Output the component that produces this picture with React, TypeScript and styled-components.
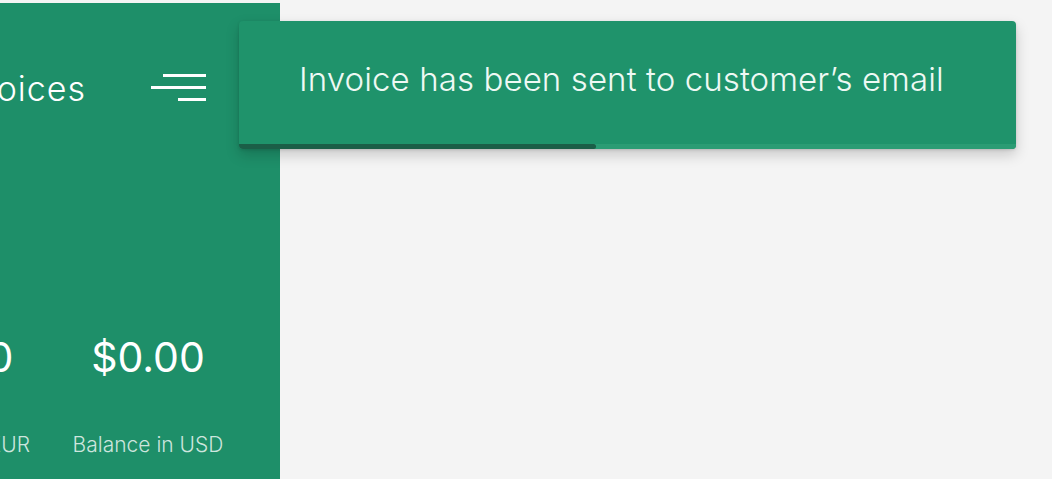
import styled, { createGlobalStyle } from "styled-components";

const GlobalStyle = createGlobalStyle`
  html, body {
    margin: 0;
    padding: 0;
    background: #f4f4f4;
    font-family: Inter, "Noto Sans", "Liberation Sans", sans-serif;
  }
`;

const Page = styled.div`
  width: 1052px;
  height: 479px;
  overflow: hidden;
  position: relative;
  display: flex;
  align-items: flex-end;
`;

const Sidebar = styled.aside`
  width: 280px;
  height: 476px;
  background: #1e8f69;
  overflow: hidden;
  color: #fff;
`;

const SidebarInner = styled.div`
  width: 420px;
  margin-left: -140px;
  display: flex;
  flex-direction: column;
  padding-top: 64px;
`;

const Header = styled.div`
  display: flex;
  align-items: center;
  justify-content: flex-end;
  gap: 64px;
  padding-right: 74px;
  height: 40px;
`;

const Title = styled.h1`
  margin: 4px 0 0;
  font-size: 34px;
  line-height: 40px;
  font-weight: 300;
  letter-spacing: 1px;
  color: #fff;
  white-space: nowrap;
`;

const MenuButton = styled.button`
  width: 56px;
  height: 27px;
  padding: 0;
  border: 0;
  background: none;
  display: flex;
  flex-direction: column;
  align-items: flex-end;
  justify-content: space-between;
  cursor: pointer;
`;

const MenuLine = styled.span<{ $width: number }>`
  display: block;
  width: ${(p) => p.$width}px;
  height: 3px;
  background: #fff;
`;

const Balances = styled.div`
  display: flex;
  justify-content: flex-end;
  gap: 40px;
  padding-right: 56px;
  margin-top: 226px;
`;

const Balance = styled.div`
  width: 152px;
  display: flex;
  flex-direction: column;
  align-items: center;
  flex-shrink: 0;
`;

const Amount = styled.div`
  font-size: 41px;
  line-height: 48px;
  font-weight: 400;
  color: #fff;
  white-space: nowrap;
`;

const AmountLabel = styled.div`
  margin-top: 52px;
  font-size: 21px;
  line-height: 24px;
  font-weight: 300;
  color: rgba(255, 255, 255, 0.78);
  white-space: nowrap;
`;

const Toast = styled.div`
  position: absolute;
  left: 239px;
  top: 21px;
  width: 777px;
  height: 128px;
  border-radius: 4px;
  background: #1f936b;
  box-shadow: 0 6px 14px rgba(0, 0, 0, 0.18), 0 1px 3px rgba(0, 0, 0, 0.12);
  display: flex;
  flex-direction: column;
  overflow: hidden;
`;

const ToastMessage = styled.div`
  flex: 1;
  padding: 40px 60px 0;
  font-size: 33px;
  line-height: 36px;
  font-weight: 300;
  letter-spacing: 0.1px;
  color: #eef9f4;
  white-space: nowrap;
`;

const ProgressTrack = styled.div`
  height: 5px;
  background: #2b9c74;
`;

const ProgressBar = styled.div`
  height: 100%;
  background: #1b5e47;
  border-radius: 0 3px 3px 0;
`;

const balances = [
  { amount: "€0.00", label: "Balance in EUR" },
  { amount: "$0.00", label: "Balance in USD" },
];

export default function App() {
  const progress = 46;

  return (
    <>
      <GlobalStyle />
      <Page>
        <Sidebar>
          <SidebarInner>
            <Header>
              <Title>Invoices</Title>
              <MenuButton aria-label="Menu">
                <MenuLine $width={43} />
                <MenuLine $width={55} />
                <MenuLine $width={28} />
              </MenuButton>
            </Header>
            <Balances>
              {balances.map((b) => (
                <Balance key={b.label}>
                  <Amount>{b.amount}</Amount>
                  <AmountLabel>{b.label}</AmountLabel>
                </Balance>
              ))}
            </Balances>
          </SidebarInner>
        </Sidebar>
        <Toast role="status">
          <ToastMessage>Invoice has been sent to customer’s email</ToastMessage>
          <ProgressTrack>
            <ProgressBar style={{ width: `${progress}%` }} />
          </ProgressTrack>
        </Toast>
      </Page>
    </>
  );
}
